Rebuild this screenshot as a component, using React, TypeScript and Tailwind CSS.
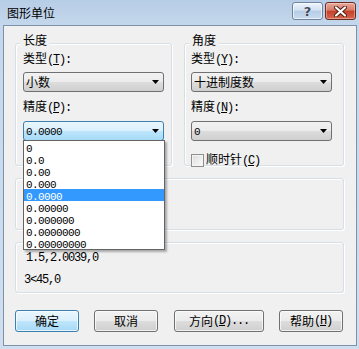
import React from "react";

function M({ children }: { children: React.ReactNode }) {
  return (
    <span className="font-['Liberation_Mono',monospace] text-[12px] tracking-[-1.2px]">
      {children}
    </span>
  );
}

function S({ children }: { children: React.ReactNode }) {
  return (
    <span className="font-['Liberation_Mono',monospace] text-[11px] tracking-[-0.6px]">
      {children}
    </span>
  );
}

function Arrow() {
  return (
    <svg width="7" height="4" viewBox="0 0 7 4" className="shrink-0">
      <path d="M0 0H7L3.5 4Z" fill="#000" />
    </svg>
  );
}

function Select({
  children,
  focused,
}: {
  children?: React.ReactNode;
  focused?: boolean;
}) {
  return (
    <div
      className={
        focused
          ? "h-[20px] w-[141px] rounded-[3px] border border-[#3c7fb1] bg-[linear-gradient(#eaf6fd_0%,#d9f0fc_50%,#bee6fd_50%,#a7d9f5_100%)] flex items-center pl-[2px] pr-[4px]"
          : "h-[20px] w-[141px] rounded-[3px] border border-[#707070] bg-[linear-gradient(#f2f2f2_0%,#ebebeb_50%,#dddddd_50%,#cfcfcf_100%)] flex items-center pl-[2px] pr-[4px]"
      }
    >
      <div className="flex-1 leading-[12px] whitespace-nowrap">{children}</div>
      <Arrow />
    </div>
  );
}

function Group({
  label,
  className,
  children,
}: {
  label?: string;
  className: string;
  children?: React.ReactNode;
}) {
  return (
    <div
      className={
        "relative rounded-[3px] border border-[#d5dfe5] shadow-[inset_1px_1px_0_#ffffff,1px_1px_0_#ffffff] " +
        className
      }
    >
      {label && (
        <div className="absolute left-[4px] top-[-10px] px-[3px] bg-[#f0f0f0] leading-[12px]">
          {label}
        </div>
      )}
      {children}
    </div>
  );
}

function Btn({
  children,
  className,
  def,
}: {
  children: React.ReactNode;
  className: string;
  def?: boolean;
}) {
  return (
    <div
      className={
        (def
          ? "border-[#3c7fb1] bg-[linear-gradient(#eaf6fd_0%,#d9f0fc_50%,#bee6fd_50%,#a7d9f5_100%)] "
          : "border-[#707070] bg-[linear-gradient(#f2f2f2_0%,#ebebeb_50%,#dddddd_50%,#cfcfcf_100%)] ") +
        "h-[22px] rounded-[3px] border flex items-center justify-center leading-[12px] shadow-[inset_0_0_0_1px_rgba(255,255,255,0.7)] " +
        className
      }
    >
      {children}
    </div>
  );
}

const items = [
  "0",
  "0.0",
  "0.00",
  "0.000",
  "0.0000",
  "0.00000",
  "0.000000",
  "0.0000000",
  "0.00000000",
];

export default function App() {
  return (
    <div className="w-[359px] h-[349px] overflow-hidden bg-[linear-gradient(#b7cde6_0px,#c4d7ec_25px,#cfdff0_100%)] flex flex-col pl-[3px] pr-[2px] pb-[3px] font-['Noto_Sans_CJK_SC','Noto_Sans',sans-serif] text-[12px] text-black">
      {/* title bar */}
      <div className="h-[25px] shrink-0 flex items-start">
        <div className="pl-[4px] pt-[7px] text-[12px] leading-[12px] text-black">
          图形单位
        </div>
        <div className="ml-auto mt-[2px] mr-[1px] flex gap-[2px]">
          <div className="w-[31px] h-[18px] rounded-[3px] border border-[#6d84a3] bg-[linear-gradient(#eef4fb_0%,#d3e1f1_45%,#b7cce6_50%,#c9dbef_100%)] flex items-center justify-center shadow-[inset_0_0_0_1px_rgba(255,255,255,0.6)]">
            <span className="font-['DejaVu_Sans',sans-serif] font-bold text-[13px] leading-[13px] text-[#3d4a5c] [text-shadow:0_0_1px_#fff]">
              ?
            </span>
          </div>
          <div className="w-[31px] h-[18px] rounded-[3px] border border-[#6b2a20] bg-[linear-gradient(#e9a99c_0%,#d77a66_45%,#c4402a_50%,#d7644c_100%)] flex items-center justify-center shadow-[inset_0_0_0_1px_rgba(255,255,255,0.35)]">
            <svg width="13" height="11" viewBox="0 0 13 11">
              <path
                d="M2 1.5L11 9.5M11 1.5L2 9.5"
                stroke="#4a1c14"
                strokeWidth="4"
                strokeLinecap="round"
              />
              <path
                d="M2 1.5L11 9.5M11 1.5L2 9.5"
                stroke="#ffffff"
                strokeWidth="2.2"
                strokeLinecap="round"
              />
            </svg>
          </div>
        </div>
      </div>

      {/* client area */}
      <div className="flex-1 border border-[#7d92aa] bg-[#f0f0f0] flex flex-col pl-[11px] pr-[12px]">
        <div className="mt-[17px] flex gap-[12px]">
          <Group label="长度" className="w-[157px] h-[123px] pl-[7px] pt-[8px]">
            <div className="leading-[12px]">
              类型<M>(<u>T</u>):</M>
            </div>
            <div className="mt-[6px]">
              <Select>小数</Select>
            </div>
            <div className="mt-[8px] leading-[12px]">
              精度<M>(<u>P</u>):</M>
            </div>
            <div className="relative mt-[7px]">
              <Select focused>
                <S>0.0000</S>
              </Select>
              <div className="absolute left-0 top-[19px] z-10 w-[142px] h-[110px] border border-[#646464] bg-white shadow-[2px_2px_2px_rgba(0,0,0,0.3)] flex flex-col">
                {items.map((t, i) => (
                  <div
                    key={t}
                    className={
                      i === 4
                        ? "h-[12px] leading-[12px] pl-[2px] bg-[#3399ff] text-white"
                        : "h-[12px] leading-[12px] pl-[2px]"
                    }
                  >
                    <S>{t}</S>
                  </div>
                ))}
              </div>
            </div>
          </Group>
          <Group label="角度" className="w-[160px] h-[123px] pl-[6px] pt-[8px]">
            <div className="leading-[12px]">
              类型<M>(<u>Y</u>):</M>
            </div>
            <div className="mt-[6px]">
              <Select>十进制度数</Select>
            </div>
            <div className="mt-[8px] leading-[12px]">
              精度<M>(<u>N</u>):</M>
            </div>
            <div className="mt-[7px]">
              <Select>
                <S>0</S>
              </Select>
            </div>
            <div className="mt-[12px] flex items-center">
              <div className="w-[13px] h-[13px] border border-[#8e8f8f] bg-[linear-gradient(135deg,#dcdcdc,#fbfbfb)] shadow-[inset_0_0_0_1px_#f4f4f4]" />
              <div className="ml-[2px] leading-[12px]">
                顺时针<M>(<u>C</u>)</M>
              </div>
            </div>
          </Group>
        </div>

        <Group className="mt-[12px] h-[52px] pl-[7px] pt-[25px]">
          <div className="w-[143px]">
            <Select />
          </div>
        </Group>

        <Group className="mt-[12px] h-[51px] pl-[10px] pt-[7px]">
          <div className="leading-[12px]">
            <M>1.5,2.0039,0</M>
          </div>
          <div className="mt-[8px] -ml-[2px] leading-[12px]">
            <M>3&lt;45,0</M>
          </div>
        </Group>

        <div className="mt-[17px] flex">
          <Btn def className="w-[64px]">
            确定
          </Btn>
          <Btn className="w-[64px] ml-[15px]">取消</Btn>
          <Btn className="w-[90px] ml-[16px]">
            方向<M>(<u>D</u>)...</M>
          </Btn>
          <Btn className="w-[64px] ml-[15px]">
            帮助<M>(<u>H</u>)</M>
          </Btn>
        </div>
      </div>
    </div>
  );
}
